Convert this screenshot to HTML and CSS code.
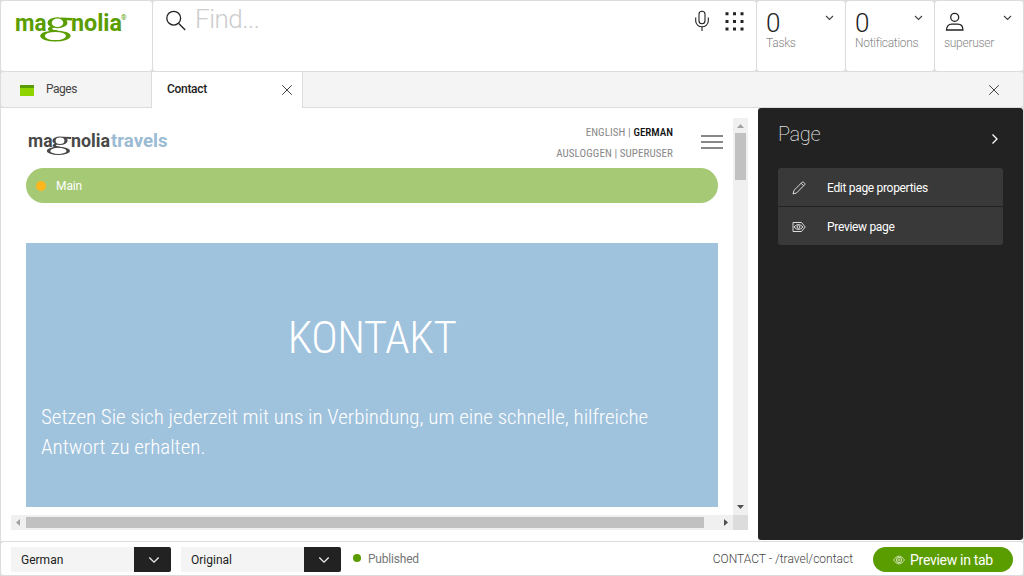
FILE: index.html
```html
<!DOCTYPE html>
<html lang="en">
<head>
<meta charset="utf-8">
<title>Magnolia - Contact</title>
<link rel="stylesheet" href="styles.css">
</head>
<body>
<div class="app">
  <header class="topbar">
    <div class="cell brand">
      <svg class="brand-logo" width="118" height="34" viewBox="0 0 118 34">
        <g class="logo-sans" font-size="24">
          <text x="0" y="21" textLength="31.500" lengthAdjust="spacingAndGlyphs">ma</text>
          <text x="56" y="21" textLength="51" lengthAdjust="spacingAndGlyphs">nolia</text>
        </g>
        <g class="logo-g" fill-rule="evenodd">
          <path d="M32.500 12.700a10 5.500 0 1 0 20 0a10 5.500 0 1 0-20 0zM36.700 12.700a5.800 4.300 0 1 1 11.600 0a5.800 4.300 0 1 1-11.600 0z"/>
          <path d="M46 7.600L57 8v2.400l-7.500-.2zM35.500 16.200c-4 2.300-3.500 4.800 2 5.200l5 .4v-1.500c-4.500-.2-7.500-1.200-3.500-3z"/>
          <path d="M25.200 26a15.200 5.500 0 1 0 30.400 0a15.200 5.500 0 1 0-30.400 0zM29.800 26a10.600 4.100 0 1 1 21.200 0a10.600 4.100 0 1 1-21.200 0z"/>
        </g>
        <text class="logo-reg" x="106" y="9.500" font-size="7">®</text>
      </svg>
    </div>
    <div class="cell find">
      <svg class="i-search" width="22" height="22" viewBox="0 0 22 22"><circle cx="8.700" cy="8.200" r="6.900"/><path d="M13.500 13.200L20.200 20"/></svg>
      <span class="find-text">Find...</span>
      <svg class="i-mic" width="16" height="22" viewBox="0 0 16 22"><rect x="5" y="1.300" width="6" height="12.500" rx="3"/><path d="M1.700 7.500v3.500a6.300 5.800 0 0 0 12.600 0v-3.500M8 17v4"/></svg>
      <svg class="i-grid" width="19" height="19" viewBox="0 0 19 19"><path d="M.5 1.700h3M8 1.700h3M15.500 1.700h3M.5 9.500h3M8 9.500h3M15.500 9.500h3M.5 17h3M8 17h3M15.500 17h3"/></svg>
    </div>
    <div class="cell stat"><span class="num">0</span><span class="label">Tasks</span><svg class="chev" width="9" height="6" viewBox="0 0 9 6"><path d="M1 1l3.500 3.500L8 1"/></svg></div>
    <div class="cell stat"><span class="num">0</span><span class="label">Notifications</span><svg class="chev" width="9" height="6" viewBox="0 0 9 6"><path d="M1 1l3.500 3.500L8 1"/></svg></div>
    <div class="cell stat"><span class="num"><svg class="i-user" width="20" height="20" viewBox="0 0 20 20"><circle cx="9.700" cy="5.300" r="4"/><path d="M1.500 18c0-4 2.200-5.800 5.200-5.800h6c3 0 5.200 1.800 5.200 5.800z"/></svg></span><span class="label">superuser</span><svg class="chev" width="9" height="6" viewBox="0 0 9 6"><path d="M1 1l3.500 3.500L8 1"/></svg></div>
  </header>

  <nav class="tabs">
    <div class="tab tab-pages"><span class="pages-icon"></span>Pages</div>
    <div class="tab tab-active"><span>Contact</span><svg class="x" width="12" height="12" viewBox="0 0 12 12"><path d="M1.200 1.200l9.600 9.600M10.800 1.200l-9.600 9.600"/></svg></div>
    <svg class="x x-all" width="12" height="12" viewBox="0 0 12 12"><path d="M1.200 1.200l9.600 9.600M10.800 1.200l-9.600 9.600"/></svg>
  </nav>

  <main class="work">
    <section class="frame">
      <div class="page">
        <div class="page-head">
          <svg class="travel-logo" width="144" height="26" viewBox="0 0 144 26">
            <g class="logo-sans dark" font-size="18.500">
              <text x="0" y="16.300" textLength="24.500" lengthAdjust="spacingAndGlyphs">ma</text>
              <text x="43" y="16.300" textLength="39" lengthAdjust="spacingAndGlyphs">nolia</text>
              <text class="blue" x="83" y="16.300" textLength="56.500" lengthAdjust="spacingAndGlyphs">travels</text>
            </g>
            <g class="logo-g dark" fill-rule="evenodd" transform="translate(-.5 0) scale(.765)">
              <path d="M32.500 12.700a10 5.500 0 1 0 20 0a10 5.500 0 1 0-20 0zM36.700 12.700a5.800 4.300 0 1 1 11.600 0a5.800 4.300 0 1 1-11.600 0z"/>
              <path d="M46 7.600L57 8v2.400l-7.500-.2zM35.500 16.200c-4 2.300-3.500 4.800 2 5.200l5 .4v-1.500c-4.500-.2-7.500-1.200-3.500-3z"/>
              <path d="M25.200 26a15.200 5.500 0 1 0 30.400 0a15.200 5.500 0 1 0-30.400 0zM29.800 26a10.600 4.100 0 1 1 21.200 0a10.600 4.100 0 1 1-21.200 0z"/>
            </g>
          </svg>
          <div class="meta">
            <div>ENGLISH | <b>GERMAN</b></div>
            <div>AUSLOGGEN | SUPERUSER</div>
          </div>
          <div class="burger"><i></i><i></i><i></i></div>
        </div>
        <div class="main-bar"><svg class="bar-dot" width="10" height="10" viewBox="0 0 10 10"><circle cx="5" cy="5" r="5"/></svg>Main</div>
        <div class="hero">
          <h1>KONTAKT</h1>
          <p>Setzen Sie sich jederzeit mit uns in Verbindung, um eine schnelle, hilfreiche<br>Antwort zu erhalten.</p>
        </div>
      </div>
      <div class="vscroll">
        <svg width="15" height="15" viewBox="0 0 15 15"><path fill="#a3a3a3" d="M4 10h7L7.500 6z"/></svg>
        <span class="vthumb"></span>
        <svg width="15" height="15" viewBox="0 0 15 15"><path fill="#505050" d="M4 5h7L7.500 9z"/></svg>
      </div>
      <div class="hscroll">
        <svg width="15" height="15" viewBox="0 0 15 15"><path fill="#a3a3a3" d="M9 4v7L5 7.500z"/></svg>
        <span class="hthumb"></span>
        <svg width="15" height="15" viewBox="0 0 15 15"><path fill="#505050" d="M6 4v7l4-3.500z"/></svg>
      </div>
      <div class="corner"></div>
    </section>
    <aside class="panel">
      <div class="panel-head"><span>Page</span><svg width="8" height="12" viewBox="0 0 8 12"><path d="M1.500 1.500L6 6l-4.500 4.500"/></svg></div>
      <div class="action first"><svg width="14" height="14" viewBox="0 0 14 14"><path d="M1 13l1-3.700L10.200 1.200q.7-.6 1.400 0l1.100 1.100q.6.700 0 1.400L4.600 11.900zM9.200 2.300l2.500 2.500"/></svg>Edit page properties</div>
      <div class="action last"><svg width="14" height="14" viewBox="0 0 14 14"><path d="M1 2.500h8.500L13.200 7l-3.700 4.500H1zM2 7q4.500-5 9 0q-4.500 5-9 0z"/><circle cx="6.500" cy="7" r="1.400"/></svg>Preview page</div>
    </aside>
  </main>

  <footer class="status">
    <div class="select"><span>German</span><i><svg width="12" height="8" viewBox="0 0 12 8"><path d="M1.300 1.500L6 6.200l4.700-4.700"/></svg></i></div>
    <div class="select"><span>Original</span><i><svg width="12" height="8" viewBox="0 0 12 8"><path d="M1.300 1.500L6 6.200l4.700-4.700"/></svg></i></div>
    <span class="pub-dot"></span><span class="published">Published</span>
    <span class="path">CONTACT - /travel/contact</span>
    <div class="preview"><svg width="12" height="10" viewBox="0 0 12 10"><path d="M.5 5q5.500-8 11 0q-5.500 8-11 0z"/><circle cx="6" cy="5" r="2.700"/><circle cx="6" cy="5" r="1"/></svg><span>Preview in tab</span></div>
  </footer>
</div>
</body>
</html>
```
FILE: styles.css
```css
* { box-sizing: border-box; }
body { margin: 0; font-family: Roboto, "Liberation Sans", sans-serif; font-size: 12px; color: #222; }
svg { display: block; flex: none; fill: none; }
.app { width: 1024px; height: 576px; padding: 1px; background: #dcdcdc; display: flex; flex-direction: column; overflow: hidden; }

.topbar { height: 70px; flex: none; display: grid; grid-template-columns: 151px 603px 88px 88px 88px; gap: 1px; }
.cell { background: #fff; border-radius: 3px; }
.brand { padding: 9px 0 0 14px; }
.logo-sans { font-family: Roboto, sans-serif; font-weight: 700; fill: #5a9d00; }
.logo-g, .logo-reg { fill: #5a9d00; }
.logo-sans.dark, .logo-g.dark { fill: #484848; }
.logo-sans .blue { fill: #9abbd3; }
.find { display: flex; align-items: flex-start; padding: 9px 12px 0 12px; }
.i-search, .i-mic, .i-user { stroke: #222; stroke-width: 1.3; }
.find-text { flex: 1; margin: -7px 0 0 8px; font-size: 26px; line-height: 32px; font-weight: 300; letter-spacing: -.5px; color: #ccc; }
.i-mic { margin: 0 15px 0 0; stroke-width: 1.1; }
.i-grid { margin-top: 2px; stroke: #222; stroke-width: 3; }
.stat { display: grid; grid-template-columns: 1fr 9px; align-content: start; padding: 6px 11px 0 9px; }
.num { height: 30px; font-size: 26px; line-height: 32px; font-weight: 300; letter-spacing: -.5px; }
.label { order: 3; grid-column: 1 / 3; font-weight: 300; line-height: 14px; margin-top: -1px; letter-spacing: -.28px; color: #888; }
.chev { margin-top: 8px; stroke: #444; stroke-width: 1.2; }
.i-user { margin: 5px 0 0 1px; }

.tabs { height: 36px; flex: none; border-top: 1px solid #dcdcdc; display: flex; background: #f4f4f4; border-radius: 3px; position: relative; z-index: 1; }
.tab { display: flex; align-items: center; padding-bottom: 2px; letter-spacing: -.3px; }
.tab-pages { width: 150px; padding-left: 19px; color: #444; letter-spacing: -.5px; }
.pages-icon { width: 14px; height: 11px; margin: 3px 12px 0 0; background: #8fd400; border-top: 3px solid #5a9d00; }
.tab-active { width: 152px; height: 36px; padding-left: 15px; background: #fff; border: solid #dcdcdc; border-width: 0 1px; justify-content: space-between; padding-right: 9px; font-weight: 500; }
.x { stroke: #444; stroke-width: 1; margin-top: 2px; }
.x-all { margin: 12px 23px 0 auto; }

.work { height: 434px; flex: none; display: flex; background: #fff; border-top: 1px solid #dcdcdc; }
.frame { width: 757px; padding: 10px; display: grid; grid-template: 397px 15px / 722px 15px; }
.page { padding: 0 15px; overflow: hidden; }
.page-head { height: 50px; display: flex; align-items: flex-start; }
.travel-logo { margin: 13px 0 0 2px; }
.meta { margin: 4px 28px 0 auto; text-align: right; font-family: "Roboto Condensed", Roboto, sans-serif; font-stretch: condensed; font-size: 11px; line-height: 21px; letter-spacing: .08px; color: #888; }
.meta b { color: #111; font-weight: 500; letter-spacing: 0; }
.burger { width: 22px; margin: 17px -5px 0 0; display: flex; flex-direction: column; gap: 4px; }
.burger i { height: 2px; background: #888; }
.main-bar { height: 35px; border-radius: 18px; background: #a6c976; display: flex; align-items: center; color: #fff; letter-spacing: -.1px; }
.bar-dot { fill: #fdb61b; margin: 1px 10px 0 10px; }
.hero { height: 264px; margin-top: 40px; background: #9fc2dd; color: #fff; padding: 60px 15px 0; font-family: "Roboto Condensed", Roboto, sans-serif; font-stretch: condensed; font-weight: 300; }
.hero h1 { margin: 8px 0 0; font-size: 45px; line-height: 53px; font-weight: 300; letter-spacing: -.5px; text-align: center; }
.hero p { margin: 38px 0 0; font-size: 21px; line-height: 30px; letter-spacing: -.01px; white-space: nowrap; }
.vscroll { background: #f0f0f0; display: flex; flex-direction: column; }
.vthumb { width: 11px; height: 47px; margin: 0 2px auto; background: #c1c1c1; }
.hscroll { background: #f0f0f0; display: flex; }
.hthumb { width: 678px; height: 11px; margin: 2px auto 0 0; background: #c1c1c1; }
.corner { background: #dcdcdc; }

.panel { width: 265px; height: 432px; background: #222; border-radius: 3px; padding: 0 20px; }
.panel-head { height: 60px; display: flex; justify-content: space-between; font-size: 20px; line-height: 52px; font-weight: 200; letter-spacing: -.4px; color: #ddd; }
.panel-head svg { margin: 25px 4px 0 0; stroke: #fff; stroke-width: 1.3; }
.action { height: 38px; background: #393939; color: #fff; display: flex; align-items: center; gap: 21px; padding: 2px 0 0 14px; margin-bottom: 1px; letter-spacing: -.31px; }
.action svg { stroke: #ddd; stroke-width: 1; }
.first { border-radius: 3px 3px 0 0; }
.last { border-radius: 0 0 3px 3px; }

.status { flex: 1; margin-top: 1px; background: #fff; border-radius: 3px; padding: 5px 10px 0; display: flex; align-items: flex-start; }
.select { width: 160px; height: 25px; margin-right: 10px; background: #f4f4f4; display: flex; line-height: 27px; padding-left: 10px; }
.select span { flex: 1; }
.select i { width: 37px; background: #222; border-radius: 0 2px 2px 0; padding: 9px 0 0 14px; }
.select svg { stroke: #eee; stroke-width: 1.3; }
.pub-dot { width: 8px; height: 8px; border-radius: 50%; background: #5a9d00; margin: 7px 7px 0 2px; }
.published, .path { line-height: 25px; color: #777; }
.published { letter-spacing: -.2px; }
.path { margin: 0 20px 0 auto; font-weight: 300; color: #444; }
.preview { width: 140px; height: 25px; border-radius: 13px; background: #5a9d00; color: #fff; display: flex; align-items: center; justify-content: center; gap: 5px; font-size: 14px; letter-spacing: -.3px; }
.preview svg { stroke: #e5efd8; stroke-width: .8; }
```
